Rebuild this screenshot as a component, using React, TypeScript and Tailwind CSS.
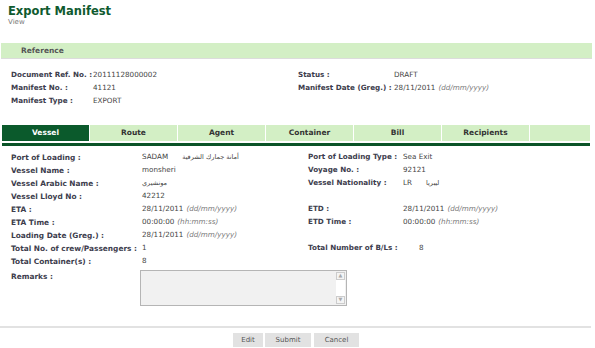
import React from 'react';

const font = "font-['DejaVu_Sans','Verdana',sans-serif]";

const refRows = [
  ['Document Ref. No. :', '20111128000002', 'Status :', 'DRAFT', ''],
  ['Manifest No. :', '41121', 'Manifest Date (Greg.) :', '28/11/2011', '(dd/mm/yyyy)'],
  ['Manifest Type :', 'EXPORT', '', '', ''],
];

const tabs = ['Vessel', 'Route', 'Agent', 'Container', 'Bill', 'Recipients'];

type Cell = { label: string; value?: string; hint?: string; arabic?: string; wide?: boolean };

const vesselRows: [Cell, Cell | null][] = [
  [{ label: 'Port of Loading :', value: 'SADAM', arabic: 'أمانة جمارك الشرقية' }, { label: 'Port of Loading Type :', value: 'Sea Exit' }],
  [{ label: 'Vessel Name :', value: 'monsheri' }, { label: 'Voyage No. :', value: '92121' }],
  [{ label: 'Vessel Arabic Name :', arabic: 'مونشيري' }, { label: 'Vessel Nationality :', value: 'LR', arabic: 'ليبريا' }],
  [{ label: 'Vessel Lloyd No :', value: '42212' }, null],
  [{ label: 'ETA :', value: '28/11/2011', hint: '(dd/mm/yyyy)' }, { label: 'ETD :', value: '28/11/2011', hint: '(dd/mm/yyyy)' }],
  [{ label: 'ETA Time :', value: '00:00:00', hint: '(hh:mm:ss)' }, { label: 'ETD Time :', value: '00:00:00', hint: '(hh:mm:ss)' }],
  [{ label: 'Loading Date (Greg.) :', value: '28/11/2011', hint: '(dd/mm/yyyy)' }, null],
  [{ label: 'Total No. of crew/Passengers :', value: '1' }, { label: 'Total Number of B/Ls :', value: '8', wide: true }],
  [{ label: 'Total Container(s) :', value: '8' }, null],
];

const Value = ({ c }: { c: Cell }) => (
  <span className="flex items-center whitespace-nowrap">
    {c.value && <span>{c.value}</span>}
    {c.hint && <span className="ml-[3px] italic text-[#7a7a7a]">{c.hint}</span>}
    {c.arabic && (
      <span className={`${c.value ? 'ml-[14px]' : ''} text-[6.5px]`} dir="rtl">
        {c.arabic}
      </span>
    )}
  </span>
);

const App = () => {
  return (
    <div className={`relative w-[595px] h-[348px] overflow-hidden bg-white ${font}`}>
      <div className="pl-[8px] pt-[4px]">
        <h1 className="text-[11.5px] leading-[14px] font-bold text-[#0f5a2f]">Export Manifest</h1>
        <div className="text-[7px] leading-[8px] text-[#777]">View</div>
      </div>

      <div className="mt-[17px] ml-[1px] w-[591px] h-[16px] bg-[#d3efc5] border-b border-[#dcdcdc] flex items-center pl-[20px] text-[7.5px] font-bold text-[#555]">
        Reference
      </div>

      <div className="mt-[10px] pl-[11px] text-[7.2px]">
        {refRows.map((r, i) => (
          <div key={i} className="flex h-[13px] items-center">
            <span className="w-[82px] text-[7.2px] font-bold text-[#3d3d4d] whitespace-nowrap">{r[0]}</span>
            <span className="w-[205px] text-[#444]">{r[1]}</span>
            <span className="w-[96px] text-[7.2px] font-bold text-[#3d3d4d] whitespace-nowrap">{r[2]}</span>
            <span className="text-[#444] whitespace-nowrap">
              {r[3]}
              {r[4] && <span className="ml-[3px] italic text-[#7a7a7a]">{r[4]}</span>}
            </span>
          </div>
        ))}
      </div>

      <div className="mt-[17px] ml-[2px] w-[588px] flex h-[16px]">
        {tabs.map((t, i) => (
          <div
            key={t}
            className={`w-[88px] flex items-center justify-center text-[7.5px] font-bold border-r border-white ${
              i === 0 ? 'bg-[#0b5a2c] text-white' : 'bg-[#d3efc5] text-[#333]'
            }`}
          >
            {t}
          </div>
        ))}
        <div className="flex-1 bg-[#d3efc5]" />
      </div>
      <div className="mt-[2px] ml-[2px] w-[588px] h-[3px] bg-[#0b5428]" />

      <div className="mt-[5px] pl-[11px] text-[7.2px]">
        {vesselRows.map(([l, r], i) => (
          <div key={i} className="flex h-[13px] items-center text-[#444]">
            <span className="w-[131px] text-[7.4px] font-bold text-[#3d3d4d] whitespace-nowrap">{l.label}</span>
            <span className="w-[166px]">
              <Value c={l} />
            </span>
            {r && (
              <>
                <span className={`${r.wide ? 'w-[111px]' : 'w-[95px]'} text-[7.2px] font-bold text-[#3d3d4d] whitespace-nowrap`}>
                  {r.label}
                </span>
                <Value c={r} />
              </>
            )}
          </div>
        ))}
        <div className="flex mt-[2px]">
          <span className="w-[129px] pt-[1px] text-[7.4px] font-bold text-[#3d3d4d]">Remarks :</span>
          <div className="w-[207px] h-[36px] bg-[#f1f1f1] border border-[#b5b5b5] flex justify-end p-[1px]">
            <div className="w-[9px] flex flex-col justify-between bg-white">
              <div className="h-[8px] border border-[#ccc] bg-[#f4f4f4] flex items-center justify-center text-[5px] text-[#aaa]">▲</div>
              <div className="h-[8px] border border-[#ccc] bg-[#f4f4f4] flex items-center justify-center text-[5px] text-[#aaa]">▼</div>
            </div>
          </div>
        </div>
      </div>

      <div className="mt-[20px] w-[591px] h-[2px] bg-[#e2e2e2]" />

      <div className="mt-[5px] flex gap-[2px] pl-[233px] text-[7px] text-[#555]">
        <button className="w-[30px] h-[14px] bg-[#e2e2e2]">Edit</button>
        <button className="w-[46px] h-[14px] bg-[#e2e2e2]">Submit</button>
        <button className="w-[45px] h-[14px] bg-[#e2e2e2] ml-[1px]">Cancel</button>
      </div>
    </div>
  );
};

export default App;
